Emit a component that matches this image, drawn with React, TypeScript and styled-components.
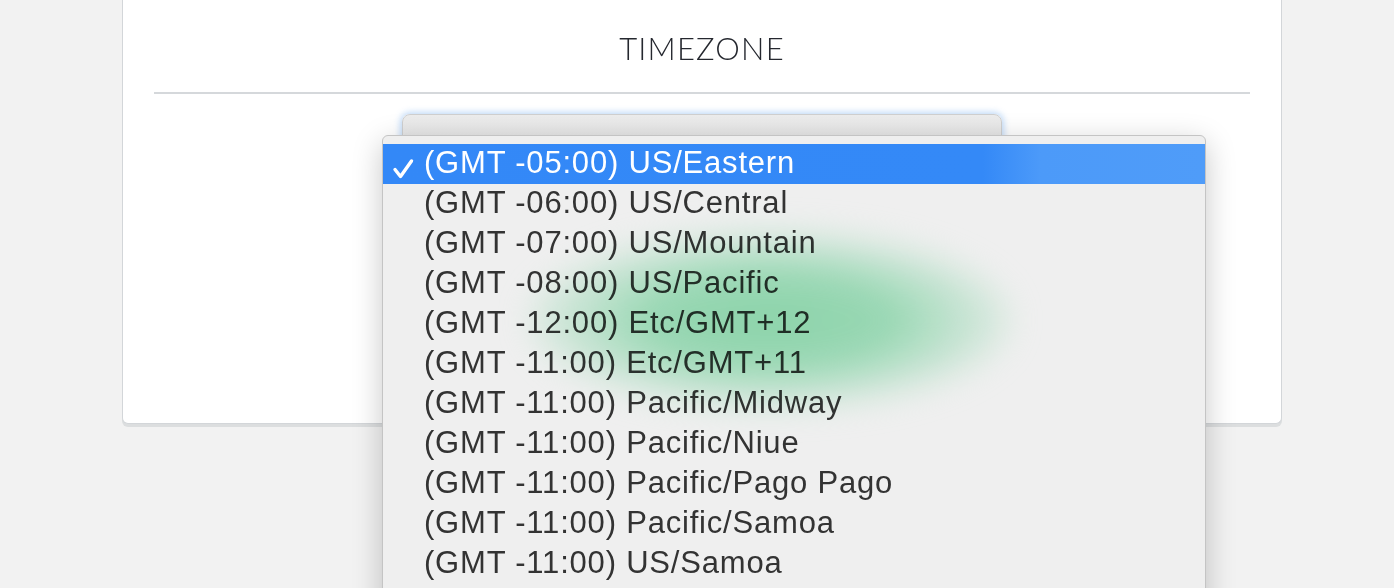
import React from 'react';
import styled, { createGlobalStyle } from 'styled-components';

const GlobalStyle = createGlobalStyle`
  html, body {
    margin: 0;
    padding: 0;
    background: #f2f2f2;
    overflow: hidden;
  }
  body {
    width: 1394px;
    height: 588px;
  }
`;

const Page = styled.div`
  position: relative;
  width: 1394px;
  height: 588px;
  padding-left: 122px;
  box-sizing: border-box;
  display: flex;
  flex-direction: column;
  align-items: flex-start;
  overflow: hidden;
`;

const Card = styled.div`
  width: 1160px;
  height: 444px;
  margin-top: -20px;
  box-sizing: border-box;
  background: #ffffff;
  border: 1px solid #d3d6d9;
  border-top: none;
  border-radius: 0 0 6px 6px;
  box-shadow: 0 3px 0 #dcdedf;
  padding: 0 31px;
  display: flex;
  flex-direction: column;
  align-items: center;
`;

const Title = styled.h2`
  margin: 0;
  padding-top: 48px;
  height: 50px;
  font-family: Lato, 'Open Sans', sans-serif;
  font-weight: 300;
  font-size: 31px;
  line-height: 40px;
  letter-spacing: 1.2px;
  color: #25282f;
`;

const Rule = styled.div`
  align-self: stretch;
  height: 2px;
  background: #d5d8db;
  margin-top: 14px;
`;

const SelectBox = styled.div`
  margin-top: 20px;
  width: 598px;
  height: 40px;
  border-radius: 8px;
  border: 1px solid #cfcfcf;
  background: linear-gradient(#ececec, #e2e2e2);
  box-shadow: 0 0 6px 2px rgba(120, 175, 240, 0.45);
`;

const Menu = styled.ul`
  position: absolute;
  left: 382px;
  top: 135px;
  width: 824px;
  height: 520px;
  margin: 0;
  padding: 8px 0 0;
  list-style: none;
  box-sizing: border-box;
  background: #efefef;
  border: 1px solid #c4c4c4;
  border-radius: 6px 6px 0 0;
  box-shadow: 0 8px 30px rgba(0, 0, 0, 0.22);
  overflow: hidden;
`;

const Option = styled.li<{ selected?: boolean }>`
  position: relative;
  height: 40px;
  box-sizing: border-box;
  padding-bottom: 3px;
  display: flex;
  align-items: center;
  padding-left: 41px;
  font-family: 'Liberation Sans', Arial, sans-serif;
  font-size: 31px;
  letter-spacing: 0.8px;
  color: ${({ selected }) => (selected ? '#ffffff' : '#333333')};
  background: ${({ selected }) =>
    selected
      ? 'linear-gradient(90deg, #3388f7 0%, #3489f7 73%, #4c9af9 80%, #4f9cf9 100%)'
      : 'transparent'};
`;

const Check = styled.span`
  position: absolute;
  left: 9px;
  top: 8px;
  width: 22px;
  height: 22px;
`;

const Glow = styled.div`
  position: absolute;
  left: 530px;
  top: 232px;
  width: 480px;
  height: 176px;
  border-radius: 50%;
  background: radial-gradient(ellipse at center, #96e3b6 0%, #a2e6bf 35%, rgba(190, 238, 210, 0.6) 60%, rgba(239, 239, 239, 0) 80%);
  filter: blur(16px);
  mix-blend-mode: multiply;
  pointer-events: none;
`;

const zones = [
  '(GMT -05:00) US/Eastern',
  '(GMT -06:00) US/Central',
  '(GMT -07:00) US/Mountain',
  '(GMT -08:00) US/Pacific',
  '(GMT -12:00) Etc/GMT+12',
  '(GMT -11:00) Etc/GMT+11',
  '(GMT -11:00) Pacific/Midway',
  '(GMT -11:00) Pacific/Niue',
  '(GMT -11:00) Pacific/Pago Pago',
  '(GMT -11:00) Pacific/Samoa',
  '(GMT -11:00) US/Samoa',
];

export default function App() {
  return (
    <Page>
      <GlobalStyle />
      <Card>
        <Title>TIMEZONE</Title>
        <Rule />
        <SelectBox />
      </Card>
      <Menu>
        {zones.map((zone, index) => (
          <Option key={zone} selected={index === 0}>
            {index === 0 && (
              <Check>
                <svg width="22" height="22" viewBox="0 0 22 22">
                  <path d="M3 11.5 L8.5 18.5 L19.5 3" fill="none" stroke="#ffffff" strokeWidth="3.4" strokeLinecap="round" strokeLinejoin="round" />
                </svg>
              </Check>
            )}
            {zone}
          </Option>
        ))}
      </Menu>
      <Glow />
    </Page>
  );
}
